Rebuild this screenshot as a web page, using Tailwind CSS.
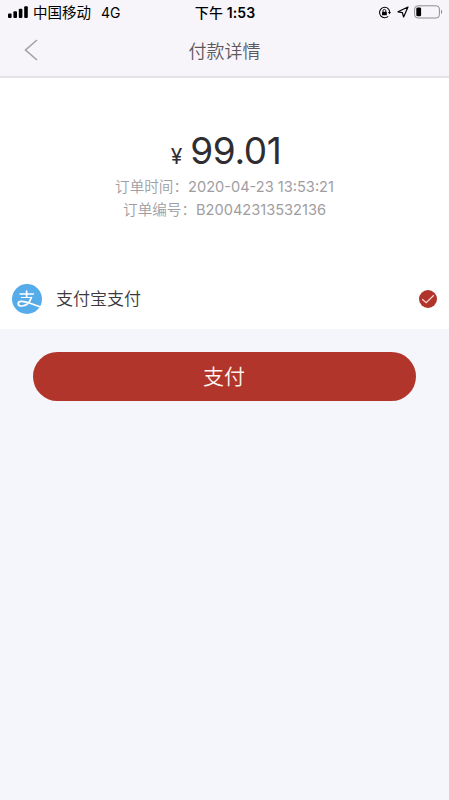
<!DOCTYPE html>
<html lang="zh-CN">
<head>
    <meta charset="UTF-8">
    <meta name="viewport" content="width=device-width, initial-scale=1.0">
    <title>付款详情</title>
    <script src="https://cdn.jsdelivr.net/npm/@tailwindcss/browser@4"></script>
</head>
<body class="min-h-screen bg-[#f5f6fb] font-['Inter','Noto_Sans_CJK_SC',sans-serif]">
    <!-- Status Bar -->
    <div class="grid grid-cols-3 items-center h-6 pl-2 pr-[6px] bg-[#f7f5fa] text-black">
        <div class="flex items-center whitespace-nowrap text-[14.5px] leading-[22px]">
            <svg class="w-5 h-3 mr-[5px]" viewBox="0 0 20 12" fill="currentColor">
                <rect x="0" y="7.5" width="3.6" height="4.5" rx="1"/>
                <rect x="5.4" y="5.2" width="3.6" height="6.8" rx="1"/>
                <rect x="10.8" y="2.8" width="3.6" height="9.2" rx="1"/>
                <rect x="16.2" y="0.2" width="3.6" height="11.8" rx="1"/>
            </svg>
            <span class="pt-[2px]">中国移动</span>
            <span class="ml-[10px] pt-px text-[14px]">4G</span>
        </div>
        <div class="pt-[2px] pr-px text-center text-[14px] leading-[22px] font-semibold tracking-[0.1px] whitespace-nowrap"><span class="font-medium">下午</span> 1:53</div>
        <div class="flex items-center justify-end">
            <!-- Orientation lock -->
            <svg class="w-[13px] h-[13px] mr-[6px]" viewBox="0 0 13 13" fill="none" stroke="currentColor">
                <path d="M10.4 2.8A5.2 5.2 0 1 0 10.2 10.4" stroke-width="1.1"/>
                <path d="M10.4 2.8A5.2 5.2 0 0 1 11.6 6" stroke-width="1.1"/>
                <path d="M9.9 5.9h3.1l-1.5 2.3z" fill="currentColor" stroke="none"/>
                <rect x="4" y="5.7" width="4.8" height="3.6" rx=".6" fill="currentColor" stroke="none"/>
                <path d="M5 6V4.8a1.4 1.4 0 0 1 2.8 0V6" stroke-width=".9"/>
            </svg>
            <!-- Location -->
            <svg class="w-3 h-3 mr-[5px]" viewBox="0 0 12 12" fill="none" stroke="currentColor" stroke-width="1.2" stroke-linejoin="round">
                <path d="M11 1L1 5.8l4.4.8L6.6 11z"/>
            </svg>
            <!-- Battery -->
            <svg class="w-[29px] h-[14px]" viewBox="0 0 29 14" fill="none">
                <rect x=".6" y=".8" width="24.8" height="12.2" rx="3.2" stroke="#8d8b90"/>
                <rect x="2.3" y="2.5" width="4.8" height="8.8" rx="1.3" fill="#000"/>
                <path d="M27 4.8c1.6.6 1.6 3.6 0 4.2z" fill="#8d8b90"/>
            </svg>
        </div>
    </div>

    <!-- Nav Bar -->
    <div class="grid grid-cols-3 items-center h-[54px] border-b-2 border-[#e4e2e6] bg-[#f7f5fa]">
        <button class="pl-6">
            <svg class="w-[14px] h-[22px]" viewBox="0 0 14 22" fill="none" stroke="#a3a1a6" stroke-width="1.6">
                <path d="M13 1L1.5 11L13 21"/>
            </svg>
        </button>
        <h1 class="pt-1 text-center text-[18px] leading-6 font-[350] text-[#5b595e]">付款详情</h1>
    </div>

    <!-- Order Info -->
    <div class="h-[191px] pt-[50px] bg-white text-center">
        <div class="flex items-baseline justify-center h-12 pl-[3px] leading-[46px] text-[#2f2d31]">
            <span class="mr-2 text-[21px]">¥</span>
            <span class="text-[37px] tracking-[-0.4px]">99.01</span>
        </div>
        <div class="text-[14.6px] leading-[23px] font-[350] text-[#9f9da1]">
            <p>订单时间：<span class="font-normal">2020-04-23 13:53:21</span></p>
            <p>订单编号：<span class="font-normal">B20042313532136</span></p>
        </div>
    </div>

    <!-- Payment Method -->
    <div class="flex items-center h-[60px] pl-3 pr-3 bg-white">
        <svg class="w-[30px] h-[30px] mr-[14px]" viewBox="0 0 30 30" fill="none">
            <circle cx="15" cy="15" r="15" fill="#56abe9"/>
            <g stroke="#fff" stroke-linecap="round">
                <path d="M8 10H21.5" stroke-width="1.3"/>
                <path d="M14.6 7V13" stroke-width="1.7"/>
                <path d="M9.4 13.5H19.6" stroke-width="1.2"/>
                <path d="M19.4 13.6C17.6 18.4 14 21.8 9.8 22C5.2 22.2 5 17.8 9.2 17.4C13.8 17 19 19.8 28.2 22.8" stroke-width="1.7"/>
            </g>
        </svg>
        <span class="flex-1 text-[17px] leading-6 font-[350] text-[#3b393e]">支付宝支付</span>
        <svg class="w-[18px] h-[18px]" viewBox="0 0 18 18" fill="none">
            <circle cx="9" cy="9" r="9" fill="#b1342a"/>
            <path d="M3.2 9.2L7.2 12.6L14.8 5.2" stroke="#fbdcd8" stroke-width="1.2"/>
        </svg>
    </div>

    <!-- Pay Button -->
    <div class="pt-[23px] px-[33px]">
        <button class="w-full h-[49px] pt-px pr-px rounded-full bg-[#b1352b] text-[21px] leading-[48px] font-[350] text-[#fff4f2]">支付</button>
    </div>
</body>
</html>
